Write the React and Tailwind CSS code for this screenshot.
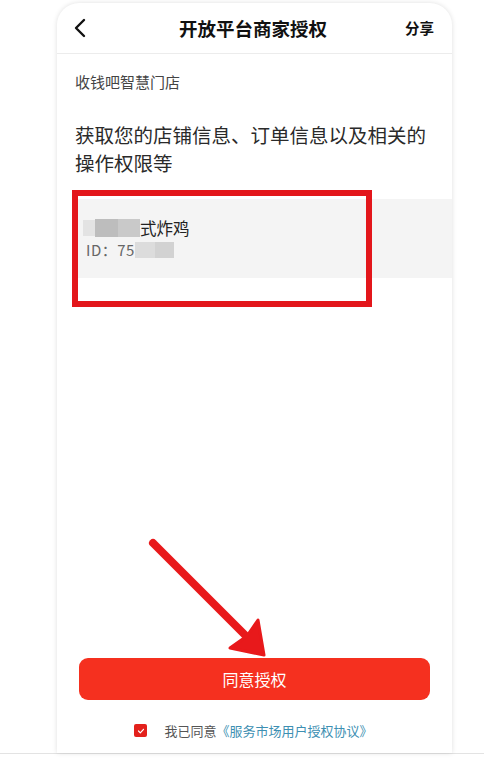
import React from "react";

const font = { fontFamily: '"Noto Sans CJK SC", "Noto Sans", sans-serif' };

export default function App() {
  return (
    <div className="relative w-[484px] h-[761px] bg-white overflow-hidden" style={font}>
      <div className="h-[754px] border-b border-[#e3e3e3] pt-[3px]">
        <div className="ml-[57px] w-[395px] h-[750px] rounded-t-[22px] bg-white shadow-[0_0_5px_rgba(0,0,0,0.13)] flex flex-col">
          {/* header */}
          <div className="h-[51px] border-b border-[#ececec] flex items-center justify-between pl-[16px] pr-[18px]">
            <svg width="14" height="20" viewBox="0 0 14 20">
              <path d="M11 2 L3 10 L11 18" fill="none" stroke="#111" strokeWidth="2.4" strokeLinecap="round" strokeLinejoin="round" />
            </svg>
            <div className="text-[18.5px] font-bold text-[#111] leading-none ml-[14px]">开放平台商家授权</div>
            <div className="text-[14.5px] font-bold text-[#111] leading-none">分享</div>
          </div>
          {/* content */}
          <div className="pl-[18px] pt-[18px]">
            <div className="text-[15px] text-[#444] leading-[20px]">收钱吧智慧门店</div>
            <div className="mt-[29px] text-[19.5px] text-[#2a2a2a] leading-[28px] tracking-[0px]">
              获取您的店铺信息、订单信息以及相关的
              <br />
              操作权限等
            </div>
            <div className="mt-[22px] h-[79px] bg-[#f4f4f4] pl-[8px] pt-[18px]">
              <div className="flex items-center h-[22px]">
                <span className="inline-block w-[12px] h-[16px] bg-[#e3e3e3]" />
                <span className="inline-block w-[23px] h-[18px] bg-[#bdbdbd]" />
                <span className="inline-block w-[22px] h-[18px] bg-[#c9c9c9]" />
                <span className="text-[16.5px] text-[#222] leading-none">式炸鸡</span>
              </div>
              <div className="flex items-center h-[21px] pl-[3px]">
                <span className="text-[15px] text-[#666] leading-none tracking-[0.5px]">ID：75</span>
                <span className="inline-block w-[20px] h-[16px] bg-[#dcdcdc]" />
                <span className="inline-block w-[19px] h-[16px] bg-[#d2d2d2]" />
              </div>
            </div>
          </div>
          <div className="flex-1" />
          {/* button */}
          <div className="px-[22px]">
            <div className="h-[42px] rounded-[9px] bg-[#f5301f] flex items-center justify-center text-white text-[16px] leading-none">
              同意授权
            </div>
          </div>
          <div className="h-[53px] flex items-start justify-center pt-[24px] pr-[2px]">
            <div className="flex items-center">
              <span className="w-[13px] h-[13px] rounded-[2px] bg-[#e3211c] flex items-center justify-center">
                <svg width="8" height="8" viewBox="0 0 8 8">
                  <path d="M1.5 4 L3.3 5.8 L6.5 2.3" fill="none" stroke="white" strokeWidth="1.2" strokeLinecap="round" strokeLinejoin="round" />
                </svg>
              </span>
              <span className="ml-[17px] text-[13px] text-[#555] leading-none">我已同意</span>
              <span className="text-[13px] text-[#3d8fb2] leading-none">《服务市场用户授权协议》</span>
            </div>
          </div>
        </div>
      </div>

      {/* annotation: red box */}
      <div className="absolute left-[72px] top-[190px] w-[300px] h-[117px] border-[6px] border-[#e3161b]" />

      {/* annotation: arrow */}
      <svg className="absolute left-0 top-0" width="484" height="761" viewBox="0 0 484 761">
        <line x1="153" y1="543" x2="252" y2="642" stroke="#e8191b" strokeWidth="8" strokeLinecap="round" />
        <path d="M264 655 L230 648 L247 636 L258 620 Z" fill="#e8191b" stroke="#e8191b" strokeWidth="3" strokeLinejoin="round" />
      </svg>
    </div>
  );
}
